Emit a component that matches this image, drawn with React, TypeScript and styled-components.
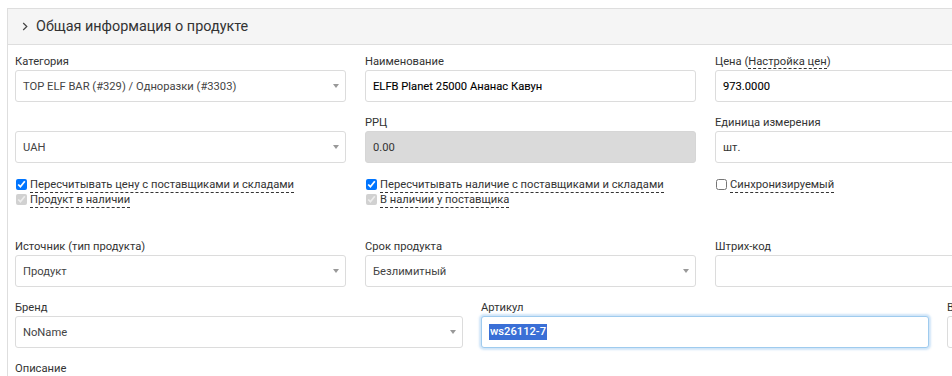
import React from "react";
import styled, { createGlobalStyle, css } from "styled-components";

const Global = createGlobalStyle`
  html, body { margin: 0; padding: 0; background: #fff; overflow: hidden; }
  body { font-family: Roboto, "Noto Sans", Arial, sans-serif; color: #333; }
`;

const Page = styled.div`
  padding: 8px 0 0 7px;
  width: 1500px;
`;

const Panel = styled.section`
  width: 1420px;
  border: 1px solid #dedede;
  border-right: none;
  background: #fff;
`;

const PanelHeader = styled.header`
  height: 35px;
  background: #f5f5f5;
  border-bottom: 1px solid #dedede;
  display: flex;
  align-items: center;
  gap: 8px;
  padding-left: 14px;
  font-size: 14.4px;
  color: #333;
`;

const PanelBody = styled.div`
  padding: 8px 7px 0;
`;

const Row = styled.div<{ $cols: number; $col: number; $gap: number }>`
  display: grid;
  grid-template-columns: repeat(${(p) => p.$cols}, ${(p) => p.$col}px);
  column-gap: ${(p) => p.$gap}px;
  align-items: start;
`;

const Field = styled.div`
  display: flex;
  flex-direction: column;
  margin-bottom: 12px;
`;

const Label = styled.label`
  font-size: 11.2px;
  line-height: 17px;
  height: 17px;
  color: #333;
  white-space: nowrap;
`;

const Dashed = styled.span`
  border-bottom: 1px dashed #333;
`;

const controlBase = css`
  box-sizing: border-box;
  height: 32px;
  width: 100%;
  border: 1px solid #dcdcdc;
  border-radius: 3px;
  padding: 0 7px;
  font-family: Roboto, "Noto Sans", Arial, sans-serif;
  font-size: 11.2px;
  color: #444;
  background: #fff;
  display: flex;
  align-items: center;
`;

const Input = styled.input<{ $disabled?: boolean; $strong?: boolean }>`
  ${controlBase}
  outline: none;
  color: ${(p) => (p.$strong ? "#000" : "#333")};
  -webkit-text-stroke: ${(p) => (p.$strong ? "0.1px #000" : "0")};
  ${(p) =>
    p.$disabled &&
    css`
      background: #dadada;
      border-color: #d6d6d6;
    `}
`;

const Select = styled.div`
  ${controlBase}
  position: relative;
  padding-right: 24px;
  white-space: nowrap;
`;

const Caret = styled.span`
  position: absolute;
  right: 6px;
  top: 13px;
  width: 0;
  height: 0;
  border-left: 3.5px solid transparent;
  border-right: 3.5px solid transparent;
  border-top: 4px solid #999;
`;

const FocusedInput = styled.div`
  ${controlBase}
  border-color: #9fcbee;
  box-shadow: 0 0 2px 2px rgba(120, 180, 235, 0.35);
`;

const Selected = styled.span`
  background: #3a6fd6;
  color: #fff;
  font-weight: 500;
  line-height: 16px;
  padding: 0 1px;
`;

const Checks = styled.div`
  display: flex;
  flex-direction: column;
  padding-top: 2px;
  margin-bottom: 31px;
`;

const CheckLine = styled.label`
  display: flex;
  align-items: center;
  gap: 3px;
  font-size: 11.2px;
  line-height: 15px;
  height: 15px;
  color: #333;
  white-space: nowrap;
`;

const Box = styled.input`
  margin: 0 0 0 1px;
  width: 11px;
  height: 11px;
`;

const Cell = styled.div``;

function Chevron() {
  return (
    <svg width="6" height="9" viewBox="0 0 6 9">
      <polyline points="1.2,1 4.8,4.5 1.2,8" fill="none" stroke="#444" strokeWidth="1.2" />
    </svg>
  );
}

function SelectBox({ value }: { value: string }) {
  return (
    <Select>
      {value}
      <Caret />
    </Select>
  );
}

function Check({ label, checked, disabled }: { label: string; checked?: boolean; disabled?: boolean }) {
  return (
    <CheckLine>
      <Box type="checkbox" defaultChecked={checked} disabled={disabled} />
      <Dashed>{label}</Dashed>
    </CheckLine>
  );
}

export default function App() {
  return (
    <>
      <Global />
      <Page>
        <Panel>
          <PanelHeader>
            <Chevron />
            <span>Общая информация о продукте</span>
          </PanelHeader>
          <PanelBody>
            <Row $cols={4} $col={331} $gap={19}>
              <Field>
                <Label>Категория</Label>
                <SelectBox value="TOP ELF BAR (#329) / Одноразки (#3303)" />
              </Field>
              <Field>
                <Label>Наименование</Label>
                <Input $strong defaultValue="ELFB Planet 25000 Ананас Кавун" />
              </Field>
              <Field>
                <Label>
                  Цена (<Dashed>Настройка цен</Dashed>)
                </Label>
                <Input $strong defaultValue="973.0000" />
              </Field>
              <Field />
            </Row>
            <Row $cols={4} $col={331} $gap={19}>
              <Cell>
                <Field>
                  <Label />
                  <SelectBox value="UAH" />
                </Field>
                <Checks>
                  <Check label="Пересчитывать цену с поставщиками и складами" checked />
                  <Check label="Продукт в наличии" checked disabled />
                </Checks>
              </Cell>
              <Cell>
                <Field>
                  <Label>РРЦ</Label>
                  <Input $disabled defaultValue="0.00" readOnly />
                </Field>
                <Checks>
                  <Check label="Пересчитывать наличие с поставщиками и складами" checked />
                  <Check label="В наличии у поставщика" checked disabled />
                </Checks>
              </Cell>
              <Cell>
                <Field>
                  <Label>Единица измерения</Label>
                  <Input defaultValue="шт." />
                </Field>
                <Checks>
                  <Check label="Синхронизируемый" />
                </Checks>
              </Cell>
              <Cell />
            </Row>
            <Row $cols={4} $col={331} $gap={19}>
              <Field>
                <Label>Источник (тип продукта)</Label>
                <SelectBox value="Продукт" />
              </Field>
              <Field>
                <Label>Срок продукта</Label>
                <SelectBox value="Безлимитный" />
              </Field>
              <Field>
                <Label>Штрих-код</Label>
                <Input defaultValue="" />
              </Field>
              <Field />
            </Row>
            <Row $cols={3} $col={448} $gap={18}>
              <Field>
                <Label>Бренд</Label>
                <SelectBox value="NoName" />
              </Field>
              <Field>
                <Label>Артикул</Label>
                <FocusedInput>
                  <Selected>ws26112-7</Selected>
                </FocusedInput>
              </Field>
              <Field>
                <Label>В</Label>
                <Input defaultValue="" />
              </Field>
            </Row>
            <Field>
              <Label>Описание</Label>
            </Field>
          </PanelBody>
        </Panel>
      </Page>
    </>
  );
}
